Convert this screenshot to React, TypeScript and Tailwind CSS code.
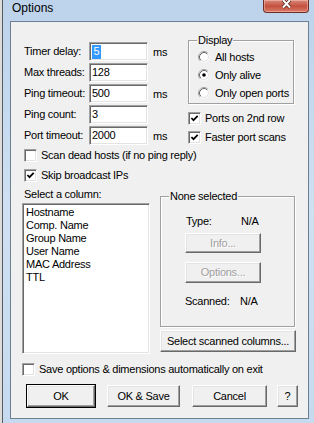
const font = "font-['Liberation_Sans',Arial,sans-serif]"

const sunken =
  'border border-t-[#a0a0a0] border-l-[#a0a0a0] border-b-white border-r-white bg-white shadow-[inset_1px_1px_0_#696969,inset_-1px_-1px_0_#e3e3e3]'

const raised =
  'flex items-center justify-center border border-t-white border-l-white border-b-[#696969] border-r-[#696969] bg-[#f0f0f0] shadow-[inset_-1px_-1px_0_#a0a0a0,inset_1px_1px_0_#e3e3e3]'

function CheckBox({ checked }: { checked?: boolean }) {
  return (
    <span className={`flex size-[13px] shrink-0 items-center justify-center ${sunken}`}>
      {checked && (
        <svg width="9" height="9" viewBox="0 0 9 9">
          <path d="M1.4 4 L3.5 6.2 L7.7 1.8" fill="none" stroke="#000" strokeWidth="1.7" />
        </svg>
      )}
    </span>
  )
}

function CheckRow({ label, checked }: { label: string; checked?: boolean }) {
  return (
    <div className="flex items-center gap-[4px]">
      <CheckBox checked={checked} />
      <span>{label}</span>
    </div>
  )
}

function Radio({ label, checked }: { label: string; checked?: boolean }) {
  return (
    <div className="flex h-[12px] items-center gap-[5px]">
      <svg width="12" height="12" viewBox="0 0 12 12" className="shrink-0">
        <circle cx="6" cy="6" r="5.5" fill="#fff" stroke="#f8f8f8" />
        <path d="M2.11 9.89 A5.5 5.5 0 0 1 9.89 2.11" fill="none" stroke="#a0a0a0" />
        <circle cx="6" cy="6" r="4.5" fill="#fff" stroke="#e3e3e3" />
        <path d="M2.82 9.18 A4.5 4.5 0 0 1 9.18 2.82" fill="none" stroke="#696969" />
        {checked && <circle cx="6" cy="6" r="1.8" fill="#000" />}
      </svg>
      <span>{label}</span>
    </div>
  )
}

function Field({ label, value, ms, selected }: { label: string; value: string; ms?: boolean; selected?: boolean }) {
  return (
    <>
      <span>{label}</span>
      <div className={`flex h-[19px] items-center pl-[2px] ${sunken}`}>
        {selected ? (
          <span className="inline-flex h-[14px] w-[9px] items-center justify-center bg-[#3399ff] text-white">{value}</span>
        ) : (
          value
        )}
      </div>
      <span className="pl-[5px] pt-[2px]">{ms ? 'ms' : ''}</span>
    </>
  )
}

function GroupBox({ title, className, children }: { title: string; className: string; children: React.ReactNode }) {
  return (
    <div className={`relative border border-[#a0a0a0] shadow-[inset_1px_1px_0_#fff,1px_1px_0_#fff] ${className}`}>
      <span className="absolute -top-[7px] left-[8px] bg-[#f0f0f0] px-[1px]">{title}</span>
      {children}
    </div>
  )
}

const columns = ['Hostname', 'Comp. Name', 'Group Name', 'User Name', 'MAC Address', 'TTL']

export default function App() {
  return (
    <div className={`flex h-[423px] w-[314px] overflow-hidden text-[11px] leading-[13px] tracking-[-0.25px] text-black ${font}`}>
      <div className="w-[3px] shrink-0 border-r border-[#5a5a5a] bg-[#dcdcdc]" />
      <div className="flex flex-1 flex-col bg-gradient-to-b from-[#bcd3eb] via-[#cfe0f2] to-[#c6daef]">
        <div className="flex h-[21px] shrink-0 items-start">
          <span className="pl-[9px] pt-[1px] text-[12px] leading-[14px] tracking-normal">Options</span>
          <div className="ml-auto mr-[5px] flex h-[13px] w-[46px] items-start justify-center rounded-b-[4px] border border-t-0 border-[#6e2d26] bg-gradient-to-b from-[#d98a7c] via-[#c4503f] to-[#d87a66] shadow-[inset_0_0_0_1px_rgba(255,210,200,0.45)]">
            <svg width="11" height="9" viewBox="0 0 11 9">
              <path d="M2 0 L9 7.5 M9 0 L2 7.5" stroke="#4a1d18" strokeWidth="3.4" />
              <path d="M2 0 L9 7.5 M9 0 L2 7.5" stroke="#fff" strokeWidth="2" />
            </svg>
          </div>
        </div>
        <div className="flex">
          <div className="w-[7px] shrink-0" />
          <div className="flex h-[398px] w-[299px] shrink-0 flex-col border border-[#6d7f92] bg-[#f0f0f0]">
            {/* top: fields + display */}
            <div className="flex">
              <div className="grid w-[177px] shrink-0 auto-rows-[19px] grid-cols-[65px_59px_auto] items-center gap-y-[2px] pl-[13px] pt-[20px]">
                <Field label="Timer delay:" value="5" ms selected />
                <Field label="Max threads:" value="128" />
                <Field label="Ping timeout:" value="500" ms />
                <Field label="Ping count:" value="3" />
                <Field label="Port timeout:" value="2000" ms />
              </div>
              <div className="flex flex-col">
                <GroupBox title="Display" className="mt-[18px] h-[64px] w-[106px]">
                  <div className="flex flex-col gap-[6px] pl-[9px] pt-[10px]">
                    <Radio label="All hosts" />
                    <Radio label="Only alive" checked />
                    <Radio label="Only open ports" />
                  </div>
                </GroupBox>
                <div className="mt-[8px] flex flex-col gap-[6px]">
                  <CheckRow label="Ports on 2nd row" checked />
                  <CheckRow label="Faster port scans" checked />
                </div>
              </div>
            </div>

            <div className="mt-[4px] flex flex-col gap-[7px] pl-[13px]">
              <CheckRow label="Scan dead hosts (if no ping reply)" />
              <CheckRow label="Skip broadcast IPs" checked />
            </div>

            {/* columns */}
            <div className="mt-[6px] flex gap-[10px] pl-[11px]">
              <div className="flex w-[128px] flex-col">
                <span className="pl-[2px]">Select a column:</span>
                <div className={`mt-[2px] h-[151px] pl-[3px] pt-[2px] ${sunken}`}>
                  {columns.map((c) => (
                    <div key={c}>{c}</div>
                  ))}
                </div>
              </div>
              <div className="flex flex-col">
                <GroupBox title="None selected" className="mt-[8px] h-[131px] w-[135px]">
                  <div className="flex flex-col pl-[24px] pt-[18px]">
                    <div className="flex pl-[1px]">
                      <span className="w-[55px]">Type:</span>
                      <span>N/A</span>
                    </div>
                    <div className={`mt-[5px] h-[20px] w-[76px] text-[#a0a0a0] [text-shadow:1px_1px_0_#fff] ${raised}`}>Info...</div>
                    <div className={`mt-[9px] h-[21px] w-[76px] text-[#a0a0a0] [text-shadow:1px_1px_0_#fff] ${raised}`}>Options...</div>
                    <div className="mt-[12px] flex">
                      <span className="w-[55px]">Scanned:</span>
                      <span>N/A</span>
                    </div>
                  </div>
                </GroupBox>
                <div className={`mt-[3px] h-[22px] w-[136px] ${raised}`}>Select scanned columns...</div>
              </div>
            </div>

            <div className="mt-[9px] pl-[11px]">
              <CheckRow label="Save options & dimensions automatically on exit" />
            </div>

            <div className="mt-[9px] flex pl-[16px]">
              <div className={`h-[22px] w-[68px] outline outline-1 outline-black ${raised}`}>OK</div>
              <div className={`ml-[12px] h-[22px] w-[73px] ${raised}`}>OK &amp; Save</div>
              <div className={`ml-[12px] h-[22px] w-[75px] ${raised}`}>Cancel</div>
              <div className={`ml-[10px] h-[22px] w-[21px] ${raised}`}>?</div>
            </div>
          </div>
        </div>
      </div>
    </div>
  )
}
